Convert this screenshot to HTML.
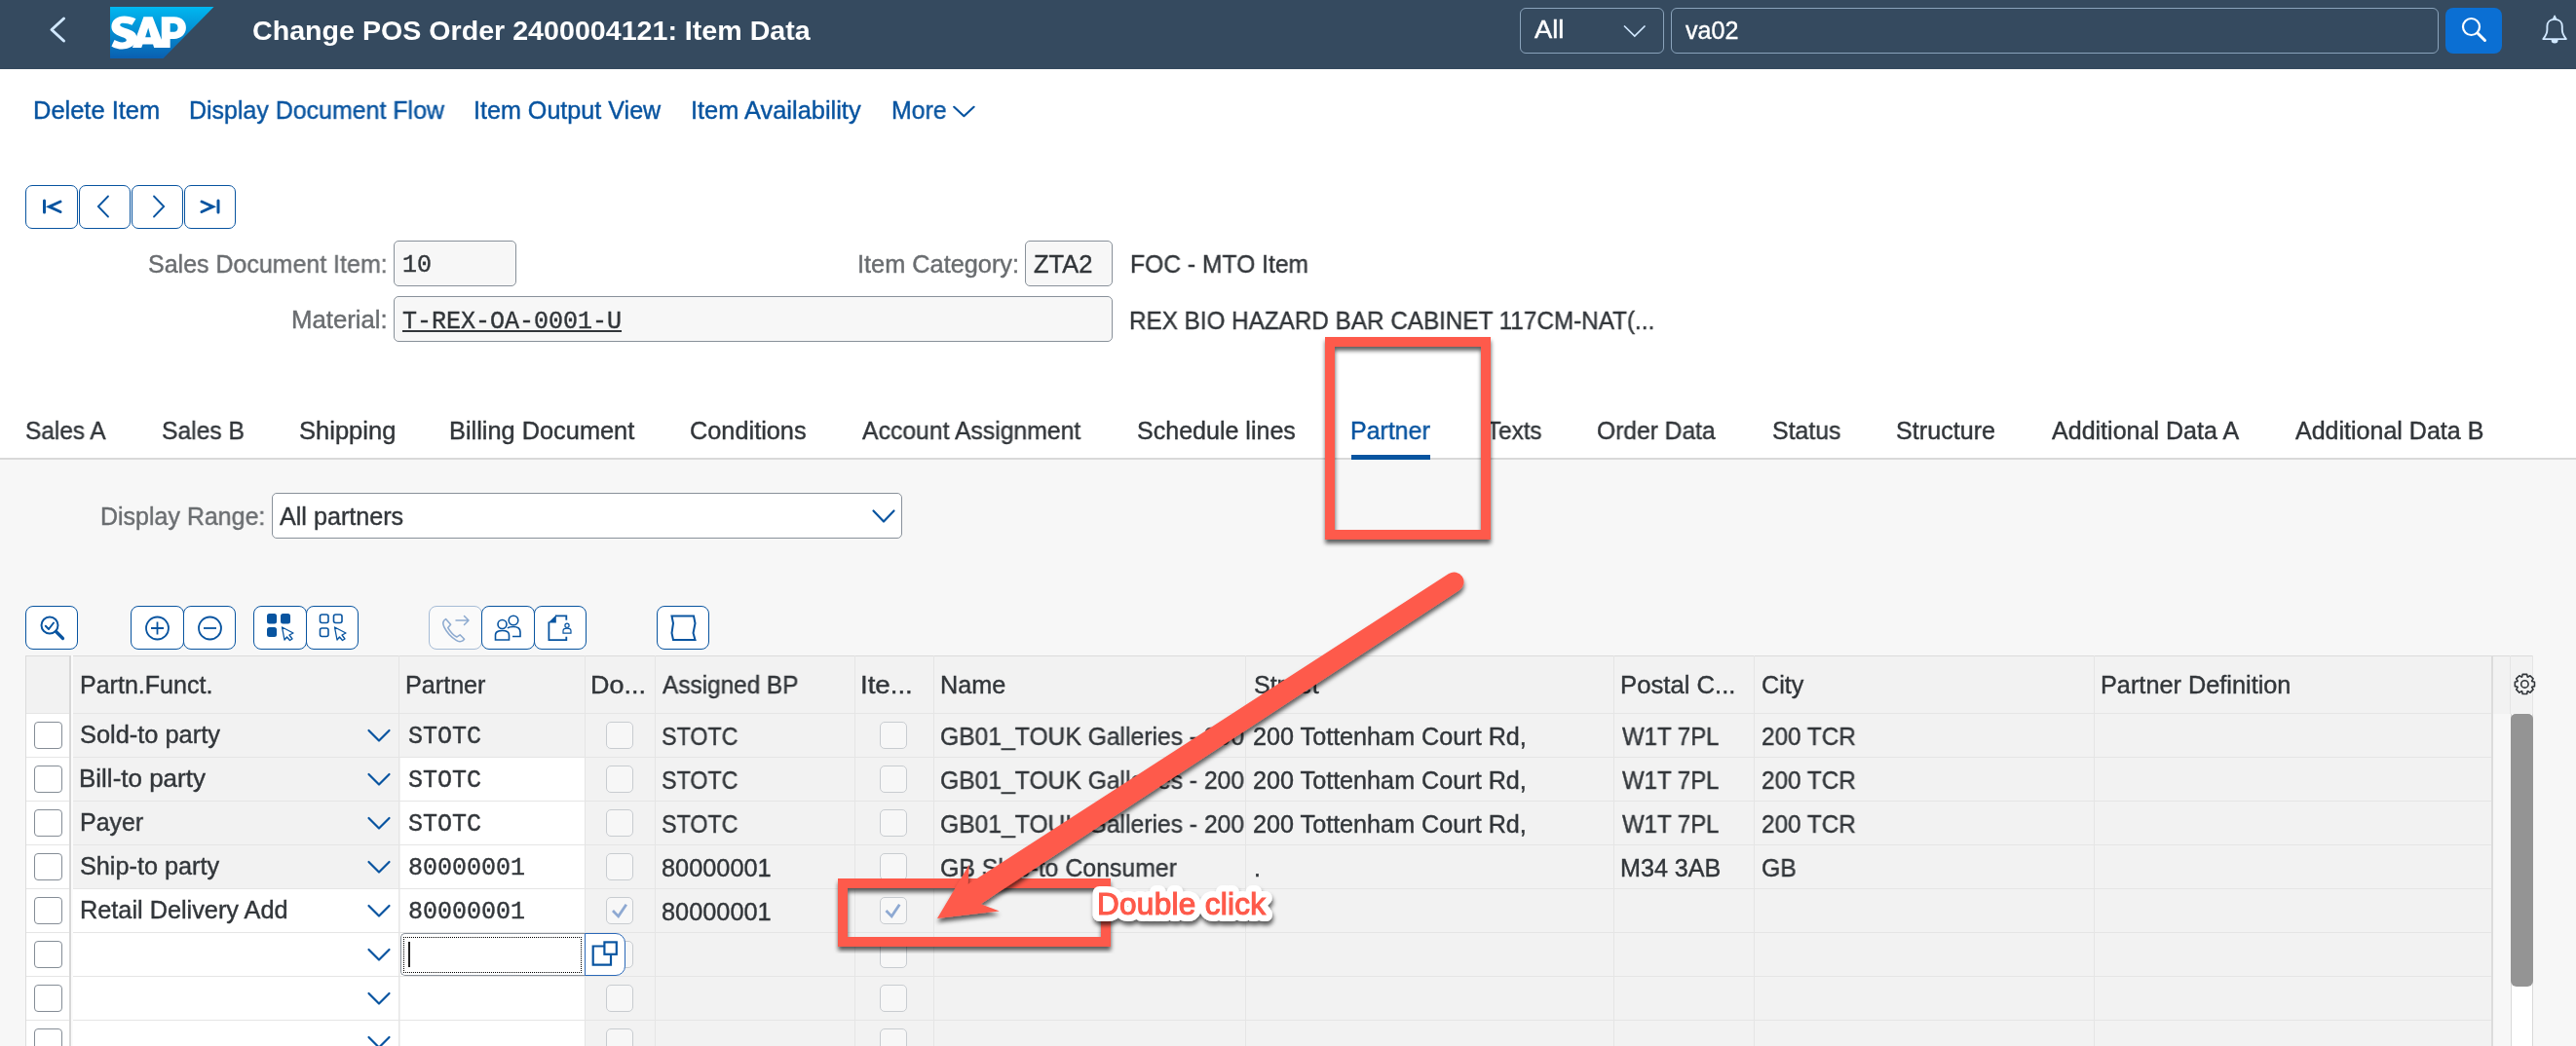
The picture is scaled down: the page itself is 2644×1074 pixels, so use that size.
<!DOCTYPE html>
<html><head><meta charset="utf-8"><title>Change POS Order</title>
<style>
html,body{margin:0;padding:0;}
body{width:2644px;height:1074px;overflow:hidden;position:relative;background:#f7f7f7;font-family:'Liberation Sans', sans-serif;}
.t{position:absolute;white-space:nowrap;will-change:transform;-webkit-text-stroke-width:0.4px;}
.b{position:absolute;box-sizing:border-box;}
svg{position:absolute;overflow:visible;}
</style></head><body>

<div class="b" style="left:0px;top:71px;width:2644px;height:399px;background:#ffffff;"></div>
<div class="b" style="left:0px;top:0px;width:2644px;height:71px;background:#354a5f;"></div>
<svg style="left:0;top:0" width="2644" height="71"><path d="M65.5 19 L53 30.5 L65.5 42" fill="none" stroke="#d1e8ff" stroke-width="3" stroke-linecap="round" stroke-linejoin="round"/><defs><linearGradient id="sapg" x1="0" y1="0" x2="0" y2="1"><stop offset="0" stop-color="#00b8f1"/><stop offset="1" stop-color="#0a5fb0"/></linearGradient></defs><polygon points="113,7 219.5,7 167.5,60 113,60" fill="url(#sapg)"/></svg>
<svg style="left:0;top:0" width="300" height="71"><g transform="translate(110 10) scale(0.043975)"><path fill="#fff" fill-rule="evenodd" d="M590 885 L850 165 L1060 165 L1268 700 L1268 165 L1560 165 C1760 165 1840 290 1840 420 C1840 570 1720 680 1560 680 L1470 680 L1470 885 L1095 885 L1070 805 L830 805 L800 885 Z M890 640 L960 420 L1020 640 Z M1470 320 L1560 320 C1620 320 1650 370 1650 420 C1650 480 1610 520 1560 520 L1470 520 Z"/><path fill="#fff" d="M670 210 C580 170 490 150 400 150 C230 150 100 250 100 400 C100 520 200 580 300 620 C380 650 450 670 450 710 C450 740 410 760 350 760 C280 760 220 730 170 705 L100 850 C180 900 270 920 350 920 C480 920 590 870 650 780 L690 650 C690 540 590 490 480 450 C380 415 300 390 300 350 C300 330 330 315 380 315 C440 315 520 335 580 360 Z"/></g></svg>
<div class="t" style="left:259.13px;top:16.87px;font-size:28.5px;line-height:28.5px;color:#ffffff;font-weight:bold;font-family:'Liberation Sans', sans-serif;transform:scaleX(1.0043);transform-origin:0 0;-webkit-text-stroke-width:0;">Change POS Order 2400004121: Item Data</div>
<div class="b" style="left:1560px;top:8px;width:148px;height:47px;border:1.5px solid #8aa3bb;border-radius:6px;"></div>
<div class="t" style="left:1575.45px;top:17.83px;font-size:25px;line-height:25px;color:#ffffff;font-weight:normal;font-family:'Liberation Sans', sans-serif;transform:scaleX(1.0930);transform-origin:0 0;">All</div>
<svg style="left:0;top:0" width="2644" height="71"><path d="M1667 26.5 L1677.8 37 L1688.5 26.5" fill="none" stroke="#d1e8ff" stroke-width="1.7"/></svg>
<div class="b" style="left:1715px;top:8px;width:788px;height:47px;border:1.5px solid #8aa3bb;border-radius:6px;"></div>
<div class="t" style="left:1730.31px;top:18.83px;font-size:25px;line-height:25px;color:#ffffff;font-weight:normal;font-family:'Liberation Sans', sans-serif;transform:scaleX(1.0023);transform-origin:0 0;">va02</div>
<div class="b" style="left:2510px;top:8px;width:58px;height:47px;background:#0b6fd3;border-radius:8px;"></div>
<svg style="left:0;top:0" width="2644" height="71"><circle cx="2536.5" cy="27.5" r="8.5" fill="none" stroke="#fff" stroke-width="2.2"/><path d="M2543 34 L2550.5 41.5" stroke="#fff" stroke-width="3" stroke-linecap="round"/><path d="M2622 19.9 C2617.2 19.9 2614.4 23 2614.4 27 L2614.4 30.5 C2614.4 34 2612.6 37.2 2610.3 40.1 L2633.9 40.1 C2631.6 37.2 2629.8 34 2629.8 30.5 L2629.8 27 C2629.8 23 2627 19.9 2622 19.9 Z" fill="none" stroke="#d1e8ff" stroke-width="1.9" stroke-linejoin="round"/><path d="M2618.6 41 A3.5 3.5 0 0 0 2625.6 41 Z" fill="#d1e8ff"/><path d="M2620.3 19.5 L2622.1 15.8 L2623.9 19.5 Z" fill="#d1e8ff" stroke="#d1e8ff" stroke-width="1" stroke-linejoin="round"/></svg>
<div class="t" style="left:33.81px;top:100.83px;font-size:25px;line-height:25px;color:#0854a0;font-weight:normal;font-family:'Liberation Sans', sans-serif;transform:scaleX(1.0182);transform-origin:0 0;">Delete Item</div>
<div class="t" style="left:193.65px;top:100.83px;font-size:25px;line-height:25px;color:#0854a0;font-weight:normal;font-family:'Liberation Sans', sans-serif;transform:scaleX(0.9977);transform-origin:0 0;">Display Document Flow</div>
<div class="t" style="left:486.38px;top:100.83px;font-size:25px;line-height:25px;color:#0854a0;font-weight:normal;font-family:'Liberation Sans', sans-serif;transform:scaleX(1.0050);transform-origin:0 0;">Item Output View</div>
<div class="t" style="left:708.96px;top:100.83px;font-size:25px;line-height:25px;color:#0854a0;font-weight:normal;font-family:'Liberation Sans', sans-serif;transform:scaleX(1.0160);transform-origin:0 0;">Item Availability</div>
<div class="t" style="left:914.96px;top:100.83px;font-size:25px;line-height:25px;color:#0854a0;font-weight:normal;font-family:'Liberation Sans', sans-serif;transform:scaleX(0.9943);transform-origin:0 0;">More</div>
<svg style="left:0;top:0" width="1100" height="200"><path d="M979.2 109.8 L989.4 119.2 L999.6 109.8" fill="none" stroke="#0854a0" stroke-width="2.2" stroke-linecap="round" stroke-linejoin="round"/></svg>
<div class="b" style="left:26px;top:190px;width:53.5px;height:45px;border:1.5px solid #0854a0;border-radius:7px;background:#fff;"></div>
<div class="b" style="left:80.5px;top:190px;width:53.5px;height:45px;border:1.5px solid #0854a0;border-radius:7px;background:#fff;"></div>
<div class="b" style="left:134.5px;top:190px;width:53.5px;height:45px;border:1.5px solid #0854a0;border-radius:7px;background:#fff;"></div>
<div class="b" style="left:188.5px;top:190px;width:53.5px;height:45px;border:1.5px solid #0854a0;border-radius:7px;background:#fff;"></div>
<svg style="left:0;top:0" width="300" height="260"><path d="M45.5 206 L45.5 218" stroke="#0854a0" stroke-width="3" stroke-linecap="round"/><path d="M62 207 L50.5 212.2 L62 217.5" fill="none" stroke="#0854a0" stroke-width="3" stroke-linecap="round" stroke-linejoin="miter"/><path d="M111 201.5 L100.8 212 L111 222.5" fill="none" stroke="#0854a0" stroke-width="1.8" stroke-linecap="round"/><path d="M158 201.5 L168.2 212 L158 222.5" fill="none" stroke="#0854a0" stroke-width="1.8" stroke-linecap="round"/><path d="M207 207 L218.5 212.2 L207 217.5" fill="none" stroke="#0854a0" stroke-width="3" stroke-linecap="round"/><path d="M224 206 L224 218" stroke="#0854a0" stroke-width="3" stroke-linecap="round"/></svg>
<div class="t" style="left:152.47px;top:258.83px;font-size:25px;line-height:25px;color:#6a6d70;font-weight:normal;font-family:'Liberation Sans', sans-serif;transform:scaleX(0.9987);transform-origin:0 0;">Sales Document Item:</div>
<div class="b" style="left:404px;top:247px;width:126px;height:46.5px;background:#f7f7f7;border:1px solid #89919a;border-radius:5px;"></div>
<div class="t" style="left:413.00px;top:259.85px;font-size:25px;line-height:25px;color:#32363a;font-weight:normal;font-family:'Liberation Mono', monospace;">10</div>
<div class="t" style="left:880.26px;top:258.83px;font-size:25px;line-height:25px;color:#6a6d70;font-weight:normal;font-family:'Liberation Sans', sans-serif;transform:scaleX(1.0128);transform-origin:0 0;">Item Category:</div>
<div class="b" style="left:1052px;top:247px;width:90px;height:46.5px;background:#f7f7f7;border:1px solid #89919a;border-radius:5px;"></div>
<div class="t" style="left:1060.69px;top:258.83px;font-size:25px;line-height:25px;color:#32363a;font-weight:normal;font-family:'Liberation Sans', sans-serif;transform:scaleX(1.0172);transform-origin:0 0;">ZTA2</div>
<div class="t" style="left:1159.58px;top:258.83px;font-size:25px;line-height:25px;color:#32363a;font-weight:normal;font-family:'Liberation Sans', sans-serif;transform:scaleX(0.9859);transform-origin:0 0;">FOC - MTO Item</div>
<div class="t" style="left:299.39px;top:316.33px;font-size:25px;line-height:25px;color:#6a6d70;font-weight:normal;font-family:'Liberation Sans', sans-serif;transform:scaleX(1.0301);transform-origin:0 0;">Material:</div>
<div class="b" style="left:404px;top:304px;width:738px;height:47px;background:#f7f7f7;border:1px solid #89919a;border-radius:5px;"></div>
<div class="t" style="left:413.00px;top:317.85px;font-size:25px;line-height:25px;color:#32363a;font-weight:normal;font-family:'Liberation Mono', monospace;text-decoration:underline;text-underline-offset:1.5px;text-decoration-thickness:2px;">T-REX-OA-0001-U</div>
<div class="t" style="left:1159.01px;top:317.03px;font-size:25px;line-height:25px;color:#32363a;font-weight:normal;font-family:'Liberation Sans', sans-serif;transform:scaleX(0.9704);transform-origin:0 0;">REX BIO HAZARD BAR CABINET 117CM-NAT(...</div>
<div class="t" style="left:26.09px;top:429.83px;font-size:25px;line-height:25px;color:#32363a;font-weight:normal;font-family:'Liberation Sans', sans-serif;transform:scaleX(0.9749);transform-origin:0 0;">Sales A</div>
<div class="t" style="left:165.88px;top:429.83px;font-size:25px;line-height:25px;color:#32363a;font-weight:normal;font-family:'Liberation Sans', sans-serif;transform:scaleX(0.9854);transform-origin:0 0;">Sales B</div>
<div class="t" style="left:307.24px;top:429.83px;font-size:25px;line-height:25px;color:#32363a;font-weight:normal;font-family:'Liberation Sans', sans-serif;transform:scaleX(1.0215);transform-origin:0 0;">Shipping</div>
<div class="t" style="left:460.72px;top:429.83px;font-size:25px;line-height:25px;color:#32363a;font-weight:normal;font-family:'Liberation Sans', sans-serif;transform:scaleX(1.0142);transform-origin:0 0;">Billing Document</div>
<div class="t" style="left:708.01px;top:429.83px;font-size:25px;line-height:25px;color:#32363a;font-weight:normal;font-family:'Liberation Sans', sans-serif;transform:scaleX(1.0124);transform-origin:0 0;">Conditions</div>
<div class="t" style="left:884.95px;top:429.83px;font-size:25px;line-height:25px;color:#32363a;font-weight:normal;font-family:'Liberation Sans', sans-serif;transform:scaleX(0.9899);transform-origin:0 0;">Account Assignment</div>
<div class="t" style="left:1166.66px;top:429.83px;font-size:25px;line-height:25px;color:#32363a;font-weight:normal;font-family:'Liberation Sans', sans-serif;transform:scaleX(1.0013);transform-origin:0 0;">Schedule lines</div>
<div class="t" style="left:1385.76px;top:429.83px;font-size:25px;line-height:25px;color:#0854a0;font-weight:normal;font-family:'Liberation Sans', sans-serif;transform:scaleX(0.9960);transform-origin:0 0;">Partner</div>
<div class="t" style="left:1525.86px;top:429.83px;font-size:25px;line-height:25px;color:#32363a;font-weight:normal;font-family:'Liberation Sans', sans-serif;transform:scaleX(0.9685);transform-origin:0 0;">Texts</div>
<div class="t" style="left:1639.34px;top:429.83px;font-size:25px;line-height:25px;color:#32363a;font-weight:normal;font-family:'Liberation Sans', sans-serif;transform:scaleX(0.9838);transform-origin:0 0;">Order Data</div>
<div class="t" style="left:1819.37px;top:429.83px;font-size:25px;line-height:25px;color:#32363a;font-weight:normal;font-family:'Liberation Sans', sans-serif;transform:scaleX(0.9951);transform-origin:0 0;">Status</div>
<div class="t" style="left:1946.46px;top:429.83px;font-size:25px;line-height:25px;color:#32363a;font-weight:normal;font-family:'Liberation Sans', sans-serif;transform:scaleX(1.0061);transform-origin:0 0;">Structure</div>
<div class="t" style="left:2105.95px;top:429.83px;font-size:25px;line-height:25px;color:#32363a;font-weight:normal;font-family:'Liberation Sans', sans-serif;transform:scaleX(1.0016);transform-origin:0 0;">Additional Data A</div>
<div class="t" style="left:2355.95px;top:429.83px;font-size:25px;line-height:25px;color:#32363a;font-weight:normal;font-family:'Liberation Sans', sans-serif;transform:scaleX(1.0009);transform-origin:0 0;">Additional Data B</div>
<div class="b" style="left:0px;top:470px;width:2644px;height:2px;background:#d9d9d9;"></div>
<div class="b" style="left:1387px;top:467px;width:81px;height:5px;background:#0854a0;"></div>
<div class="t" style="left:102.95px;top:518.03px;font-size:25px;line-height:25px;color:#6a6d70;font-weight:normal;font-family:'Liberation Sans', sans-serif;transform:scaleX(0.9988);transform-origin:0 0;">Display Range:</div>
<div class="b" style="left:278.5px;top:506px;width:647.5px;height:46.5px;background:#fff;border:1px solid #89919a;border-radius:5px;"></div>
<div class="t" style="left:286.95px;top:518.03px;font-size:25px;line-height:25px;color:#32363a;font-weight:normal;font-family:'Liberation Sans', sans-serif;transform:scaleX(1.0056);transform-origin:0 0;">All partners</div>
<svg style="left:0;top:0" width="1000" height="600"><path d="M896.5 524.5 L907 535.5 L917.5 524.5" fill="none" stroke="#0854a0" stroke-width="2.2" stroke-linecap="round" stroke-linejoin="round"/></svg>
<div class="b" style="left:26px;top:622px;width:54px;height:45px;border:1.5px solid #0854a0;border-radius:8px;background:#fff;"></div>
<div class="b" style="left:134px;top:622px;width:54.5px;height:45px;border:1.5px solid #0854a0;border-radius:8px;background:#fff;"></div>
<div class="b" style="left:188px;top:622px;width:54px;height:45px;border:1.5px solid #0854a0;border-radius:8px;background:#fff;"></div>
<div class="b" style="left:260px;top:622px;width:54.5px;height:45px;border:1.5px solid #0854a0;border-radius:8px;background:#fff;"></div>
<div class="b" style="left:314px;top:622px;width:54px;height:45px;border:1.5px solid #0854a0;border-radius:8px;background:#fff;"></div>
<div class="b" style="left:440px;top:622px;width:54.5px;height:45px;border:1.5px solid #a6bcd6;border-radius:8px;background:#fafafa;"></div>
<div class="b" style="left:494px;top:622px;width:54.5px;height:45px;border:1.5px solid #0854a0;border-radius:8px;background:#fff;"></div>
<div class="b" style="left:548px;top:622px;width:54px;height:45px;border:1.5px solid #0854a0;border-radius:8px;background:#fff;"></div>
<div class="b" style="left:674px;top:622px;width:54px;height:45px;border:1.5px solid #0854a0;border-radius:8px;background:#fff;"></div>
<svg style="left:0;top:0" width="800" height="700"><circle cx="51" cy="642" r="8.5" fill="none" stroke="#0854a0" stroke-width="2"/><path d="M57.5 648.5 L64.5 655.5" stroke="#0854a0" stroke-width="3.2" stroke-linecap="round"/><path d="M46.8 642.8 L50 646 L55 639.5" fill="none" stroke="#0854a0" stroke-width="2" stroke-linecap="round" stroke-linejoin="round"/><circle cx="161.5" cy="645" r="11.5" fill="none" stroke="#0854a0" stroke-width="1.8"/><path d="M155 645 L168 645 M161.5 638.5 L161.5 651.5" stroke="#0854a0" stroke-width="1.8"/><circle cx="215.5" cy="645" r="11.5" fill="none" stroke="#0854a0" stroke-width="1.8"/><path d="M209 645 L222 645" stroke="#0854a0" stroke-width="1.8"/><rect x="274" y="630" width="10" height="10.5" rx="2.5" fill="#0854a0"/><rect x="288" y="630" width="10" height="10.5" rx="2.5" fill="#0854a0"/><rect x="274" y="644" width="10" height="10" rx="2.5" fill="#0854a0"/><path d="M289.5 644 L301 650 L297 652 L300 656 L297.5 657.5 L294.5 654 L292 657 Z" fill="none" stroke="#0854a0" stroke-width="1.3" stroke-linejoin="round"/><rect x="328.5" y="631" width="8.5" height="8.5" rx="2" fill="none" stroke="#0854a0" stroke-width="1.6"/><rect x="342.5" y="631" width="8.5" height="8.5" rx="2" fill="none" stroke="#0854a0" stroke-width="1.6"/><rect x="328.5" y="645" width="8.5" height="8.5" rx="2" fill="none" stroke="#0854a0" stroke-width="1.6"/><path d="M343.5 644 L355 650 L351 652 L354 656 L351.5 657.5 L348.5 654 L346 657 Z" fill="none" stroke="#0854a0" stroke-width="1.3" stroke-linejoin="round"/><g transform="translate(457 635) scale(1.12) translate(-455 -634)"><path d="M455.5 634.5 C453 636 452.5 639 454 642 C456.5 647 460 651 465 654 C468 656 471 655 472.5 653 L468.5 649 L465.5 651 C462 649 459.5 646 457.5 642.5 L460 639.5 Z" fill="none" stroke="#8eabd0" stroke-width="1.4" stroke-linejoin="round"/></g><path d="M468 637 L481 637 M476.5 632.5 L481 637 L476.5 641.5" fill="none" stroke="#8eabd0" stroke-width="1.5" stroke-linecap="round" stroke-linejoin="round"/><circle cx="515.5" cy="641" r="4.5" fill="none" stroke="#0854a0" stroke-width="1.6"/><circle cx="527" cy="637" r="4.8" fill="none" stroke="#0854a0" stroke-width="1.6"/><path d="M508.5 657 L508.5 652 C508.5 648.5 511 647.5 515.5 647.5 C520 647.5 522.5 648.5 522.5 652 L522.5 657 Z" fill="none" stroke="#0854a0" stroke-width="1.6"/><path d="M521 645 C522 644 524 643.5 527 643.5 C532 643.5 534 645 534 649 L534 653.5 L526 653.5" fill="none" stroke="#0854a0" stroke-width="1.6"/><path d="M570 632.3 L581.3 632.3 L581.3 636.8 M581.3 653.7 L581.3 657.1 L563.4 657.1 L563.4 638.6" fill="none" stroke="#0854a0" stroke-width="1.8"/><path d="M562.6 639.4 L570.8 631.4 L570.8 639.4 Z" fill="#0854a0"/><circle cx="582" cy="642.3" r="2.1" fill="none" stroke="#0854a0" stroke-width="1.2"/><path d="M578 650.2 L578 647.8 C578 645.8 579.5 645.2 582 645.2 C584.5 645.2 586 645.8 586 647.8 L586 650.2 Z" fill="none" stroke="#0854a0" stroke-width="1.2"/><path d="M689.5 632.5 L712 632.5 L713.5 640 L711.5 650 L713.5 657 L691 657 L689.5 650 L691 640 Z" fill="none" stroke="#0854a0" stroke-width="2" stroke-linejoin="miter"/></svg>
<div class="b" style="left:26px;top:673px;width:2574px;height:401px;background:#f2f2f2;border-left:1px solid #dcdcdc;border-top:1px solid #dcdcdc;"></div>
<div class="b" style="left:27px;top:732.5px;width:44px;height:341.5px;background:#fff;"></div>
<div class="b" style="left:2558.5px;top:732.5px;width:18.5px;height:341.5px;background:#f7f7f7;"></div>
<div class="b" style="left:2577px;top:732.5px;width:23px;height:341.5px;background:#fff;border-left:1px solid #d9d9d9;border-right:1px solid #d9d9d9;"></div>
<div class="b" style="left:2577px;top:732.5px;width:23px;height:280.5px;background:#949494;border-radius:5px 5px 6px 6px;"></div>
<div class="b" style="left:74.5px;top:912.5px;width:335.0px;height:45.0px;background:#fff;"></div>
<div class="b" style="left:74.5px;top:957.5px;width:335.0px;height:45.0px;background:#fff;"></div>
<div class="b" style="left:74.5px;top:1002.5px;width:335.0px;height:45.0px;background:#fff;"></div>
<div class="b" style="left:74.5px;top:1047.5px;width:335.0px;height:45.0px;background:#fff;"></div>
<div class="b" style="left:410.5px;top:777.5px;width:190.0px;height:45.0px;background:#fff;"></div>
<div class="b" style="left:410.5px;top:822.5px;width:190.0px;height:45.0px;background:#fff;"></div>
<div class="b" style="left:410.5px;top:867.5px;width:190.0px;height:45.0px;background:#fff;"></div>
<div class="b" style="left:410.5px;top:912.5px;width:190.0px;height:45.0px;background:#fff;"></div>
<div class="b" style="left:410.5px;top:957.5px;width:190.0px;height:45.0px;background:#fff;"></div>
<div class="b" style="left:410.5px;top:1002.5px;width:190.0px;height:45.0px;background:#fff;"></div>
<div class="b" style="left:410.5px;top:1047.5px;width:190.0px;height:45.0px;background:#fff;"></div>
<div class="b" style="left:27px;top:732.0px;width:2531px;height:1.0px;background:#e5e5e5;"></div>
<div class="b" style="left:27px;top:777.0px;width:2531px;height:1.0px;background:#e5e5e5;"></div>
<div class="b" style="left:27px;top:822.0px;width:2531px;height:1.0px;background:#e5e5e5;"></div>
<div class="b" style="left:27px;top:867.0px;width:2531px;height:1.0px;background:#e5e5e5;"></div>
<div class="b" style="left:27px;top:912.0px;width:2531px;height:1.0px;background:#e5e5e5;"></div>
<div class="b" style="left:27px;top:957.0px;width:2531px;height:1.0px;background:#e5e5e5;"></div>
<div class="b" style="left:27px;top:1002.0px;width:2531px;height:1.0px;background:#e5e5e5;"></div>
<div class="b" style="left:27px;top:1047.0px;width:2531px;height:1.0px;background:#e5e5e5;"></div>
<div class="b" style="left:71px;top:673px;width:2px;height:401px;background:#d8d8d8;"></div>
<div class="b" style="left:73px;top:673px;width:1.5px;height:401px;background:#fbfbfb;"></div>
<div class="b" style="left:409.0px;top:673px;width:1.0px;height:401px;background:#e5e5e5;"></div>
<div class="b" style="left:600.0px;top:673px;width:1.0px;height:401px;background:#e5e5e5;"></div>
<div class="b" style="left:672.0px;top:673px;width:1.0px;height:401px;background:#e5e5e5;"></div>
<div class="b" style="left:877.0px;top:673px;width:1.0px;height:401px;background:#e5e5e5;"></div>
<div class="b" style="left:958.0px;top:673px;width:1.0px;height:401px;background:#e5e5e5;"></div>
<div class="b" style="left:1277.5px;top:673px;width:1.0px;height:401px;background:#e5e5e5;"></div>
<div class="b" style="left:1656.0px;top:673px;width:1.0px;height:401px;background:#e5e5e5;"></div>
<div class="b" style="left:1799.5px;top:673px;width:1.0px;height:401px;background:#e5e5e5;"></div>
<div class="b" style="left:2149.0px;top:673px;width:1.0px;height:401px;background:#e5e5e5;"></div>
<div class="b" style="left:2557px;top:673px;width:1.5px;height:401px;background:#dcdcdc;"></div>
<div class="b" style="left:2576px;top:673px;width:1px;height:59.5px;background:#e5e5e5;"></div>
<div class="b" style="left:2599px;top:673px;width:1px;height:59.5px;background:#e5e5e5;"></div>
<div class="t" style="left:81.85px;top:690.83px;font-size:25px;line-height:25px;color:#32363a;font-weight:normal;font-family:'Liberation Sans', sans-serif;transform:scaleX(1.0012);transform-origin:0 0;">Partn.Funct.</div>
<div class="t" style="left:415.74px;top:690.83px;font-size:25px;line-height:25px;color:#32363a;font-weight:normal;font-family:'Liberation Sans', sans-serif;transform:scaleX(1.0061);transform-origin:0 0;">Partner</div>
<div class="t" style="left:605.79px;top:690.83px;font-size:25px;line-height:25px;color:#32363a;font-weight:normal;font-family:'Liberation Sans', sans-serif;transform:scaleX(1.0771);transform-origin:0 0;">Do...</div>
<div class="t" style="left:680.45px;top:690.83px;font-size:25px;line-height:25px;color:#32363a;font-weight:normal;font-family:'Liberation Sans', sans-serif;transform:scaleX(0.9741);transform-origin:0 0;">Assigned BP</div>
<div class="t" style="left:882.85px;top:690.83px;font-size:25px;line-height:25px;color:#32363a;font-weight:normal;font-family:'Liberation Sans', sans-serif;transform:scaleX(1.1055);transform-origin:0 0;">Ite...</div>
<div class="t" style="left:964.63px;top:690.83px;font-size:25px;line-height:25px;color:#32363a;font-weight:normal;font-family:'Liberation Sans', sans-serif;transform:scaleX(1.0075);transform-origin:0 0;">Name</div>
<div class="t" style="left:1287.00px;top:690.83px;font-size:25px;line-height:25px;color:#32363a;font-weight:normal;font-family:'Liberation Sans', sans-serif;">Street</div>
<div class="t" style="left:1662.89px;top:690.83px;font-size:25px;line-height:25px;color:#32363a;font-weight:normal;font-family:'Liberation Sans', sans-serif;transform:scaleX(1.0271);transform-origin:0 0;">Postal C...</div>
<div class="t" style="left:1807.72px;top:690.83px;font-size:25px;line-height:25px;color:#32363a;font-weight:normal;font-family:'Liberation Sans', sans-serif;transform:scaleX(1.0061);transform-origin:0 0;">City</div>
<div class="t" style="left:2155.93px;top:690.83px;font-size:25px;line-height:25px;color:#32363a;font-weight:normal;font-family:'Liberation Sans', sans-serif;transform:scaleX(1.0117);transform-origin:0 0;">Partner Definition</div>
<svg style="left:0;top:0" width="2644" height="760"><g transform="translate(2591.4 702.4)"><path d="M-2.83 -7.38 L-2.23 -10.06 L2.23 -10.06 L2.83 -7.38 L3.21 -7.22 L5.53 -8.69 L8.69 -5.53 L7.22 -3.21 L7.38 -2.83 L10.06 -2.23 L10.06 2.23 L7.38 2.83 L7.22 3.21 L8.69 5.53 L5.53 8.69 L3.21 7.22 L2.83 7.38 L2.23 10.06 L-2.23 10.06 L-2.83 7.38 L-3.21 7.22 L-5.53 8.69 L-8.69 5.53 L-7.22 3.21 L-7.38 2.83 L-10.06 2.23 L-10.06 -2.23 L-7.38 -2.83 L-7.22 -3.21 L-8.69 -5.53 L-5.53 -8.69 L-3.21 -7.22 Z" fill="none" stroke="#32363a" stroke-width="1.6" stroke-linejoin="round"/><circle cx="0" cy="0" r="3.7" fill="none" stroke="#32363a" stroke-width="1.6"/></g></svg>
<div class="b" style="left:35px;top:741.0px;width:29px;height:27.5px;background:#fff;border:1.5px solid #858d96;border-radius:4px;"></div>
<div class="b" style="left:622px;top:741.0px;width:28px;height:27.5px;background:#f7f7f7;border:1px solid #c8ccd0;border-radius:5px;"></div>
<div class="b" style="left:902.5px;top:741.0px;width:28.0px;height:27.5px;background:#f7f7f7;border:1px solid #c8ccd0;border-radius:5px;"></div>
<div class="t" style="left:82.45px;top:741.83px;font-size:25px;line-height:25px;color:#32363a;font-weight:normal;font-family:'Liberation Sans', sans-serif;transform:scaleX(1.0152);transform-origin:0 0;">Sold-to party</div>
<div class="t" style="left:419.00px;top:743.85px;font-size:25px;line-height:25px;color:#32363a;font-weight:normal;font-family:'Liberation Mono', monospace;">STOTC</div>
<div class="t" style="left:679.44px;top:743.83px;font-size:25px;line-height:25px;color:#32363a;font-weight:normal;font-family:'Liberation Sans', sans-serif;transform:scaleX(0.9309);transform-origin:0 0;">STOTC</div>
<div class="t" style="left:965.46px;top:743.83px;font-size:25px;line-height:25px;color:#32363a;font-weight:normal;font-family:'Liberation Sans', sans-serif;transform:scaleX(0.9862);transform-origin:0 0;">GB01_TOUK Galleries - 200</div>
<div class="t" style="left:1285.73px;top:743.83px;font-size:25px;line-height:25px;color:#32363a;font-weight:normal;font-family:'Liberation Sans', sans-serif;transform:scaleX(1.0070);transform-origin:0 0;">200 Tottenham Court Rd,</div>
<div class="t" style="left:1665.29px;top:743.83px;font-size:25px;line-height:25px;color:#32363a;font-weight:normal;font-family:'Liberation Sans', sans-serif;transform:scaleX(0.9591);transform-origin:0 0;">W1T 7PL</div>
<div class="t" style="left:1807.78px;top:743.83px;font-size:25px;line-height:25px;color:#32363a;font-weight:normal;font-family:'Liberation Sans', sans-serif;transform:scaleX(0.9725);transform-origin:0 0;">200 TCR</div>
<div class="b" style="left:35px;top:786.0px;width:29px;height:27.5px;background:#fff;border:1.5px solid #858d96;border-radius:4px;"></div>
<div class="b" style="left:622px;top:786.0px;width:28px;height:27.5px;background:#f7f7f7;border:1px solid #c8ccd0;border-radius:5px;"></div>
<div class="b" style="left:902.5px;top:786.0px;width:28.0px;height:27.5px;background:#f7f7f7;border:1px solid #c8ccd0;border-radius:5px;"></div>
<div class="t" style="left:81.47px;top:786.83px;font-size:25px;line-height:25px;color:#32363a;font-weight:normal;font-family:'Liberation Sans', sans-serif;transform:scaleX(1.0387);transform-origin:0 0;">Bill-to party</div>
<div class="t" style="left:419.00px;top:788.85px;font-size:25px;line-height:25px;color:#32363a;font-weight:normal;font-family:'Liberation Mono', monospace;">STOTC</div>
<div class="t" style="left:679.44px;top:788.83px;font-size:25px;line-height:25px;color:#32363a;font-weight:normal;font-family:'Liberation Sans', sans-serif;transform:scaleX(0.9309);transform-origin:0 0;">STOTC</div>
<div class="t" style="left:965.46px;top:788.83px;font-size:25px;line-height:25px;color:#32363a;font-weight:normal;font-family:'Liberation Sans', sans-serif;transform:scaleX(0.9862);transform-origin:0 0;">GB01_TOUK Galleries - 200</div>
<div class="t" style="left:1285.73px;top:788.83px;font-size:25px;line-height:25px;color:#32363a;font-weight:normal;font-family:'Liberation Sans', sans-serif;transform:scaleX(1.0070);transform-origin:0 0;">200 Tottenham Court Rd,</div>
<div class="t" style="left:1665.29px;top:788.83px;font-size:25px;line-height:25px;color:#32363a;font-weight:normal;font-family:'Liberation Sans', sans-serif;transform:scaleX(0.9591);transform-origin:0 0;">W1T 7PL</div>
<div class="t" style="left:1807.78px;top:788.83px;font-size:25px;line-height:25px;color:#32363a;font-weight:normal;font-family:'Liberation Sans', sans-serif;transform:scaleX(0.9725);transform-origin:0 0;">200 TCR</div>
<div class="b" style="left:35px;top:831.0px;width:29px;height:27.5px;background:#fff;border:1.5px solid #858d96;border-radius:4px;"></div>
<div class="b" style="left:622px;top:831.0px;width:28px;height:27.5px;background:#f7f7f7;border:1px solid #c8ccd0;border-radius:5px;"></div>
<div class="b" style="left:902.5px;top:831.0px;width:28.0px;height:27.5px;background:#f7f7f7;border:1px solid #c8ccd0;border-radius:5px;"></div>
<div class="t" style="left:81.55px;top:831.83px;font-size:25px;line-height:25px;color:#32363a;font-weight:normal;font-family:'Liberation Sans', sans-serif;transform:scaleX(0.9977);transform-origin:0 0;">Payer</div>
<div class="t" style="left:419.00px;top:833.85px;font-size:25px;line-height:25px;color:#32363a;font-weight:normal;font-family:'Liberation Mono', monospace;">STOTC</div>
<div class="t" style="left:679.44px;top:833.83px;font-size:25px;line-height:25px;color:#32363a;font-weight:normal;font-family:'Liberation Sans', sans-serif;transform:scaleX(0.9309);transform-origin:0 0;">STOTC</div>
<div class="t" style="left:965.46px;top:833.83px;font-size:25px;line-height:25px;color:#32363a;font-weight:normal;font-family:'Liberation Sans', sans-serif;transform:scaleX(0.9862);transform-origin:0 0;">GB01_TOUK Galleries - 200</div>
<div class="t" style="left:1285.73px;top:833.83px;font-size:25px;line-height:25px;color:#32363a;font-weight:normal;font-family:'Liberation Sans', sans-serif;transform:scaleX(1.0070);transform-origin:0 0;">200 Tottenham Court Rd,</div>
<div class="t" style="left:1665.29px;top:833.83px;font-size:25px;line-height:25px;color:#32363a;font-weight:normal;font-family:'Liberation Sans', sans-serif;transform:scaleX(0.9591);transform-origin:0 0;">W1T 7PL</div>
<div class="t" style="left:1807.78px;top:833.83px;font-size:25px;line-height:25px;color:#32363a;font-weight:normal;font-family:'Liberation Sans', sans-serif;transform:scaleX(0.9725);transform-origin:0 0;">200 TCR</div>
<div class="b" style="left:35px;top:876.0px;width:29px;height:27.5px;background:#fff;border:1.5px solid #858d96;border-radius:4px;"></div>
<div class="b" style="left:622px;top:876.0px;width:28px;height:27.5px;background:#f7f7f7;border:1px solid #c8ccd0;border-radius:5px;"></div>
<div class="b" style="left:902.5px;top:876.0px;width:28.0px;height:27.5px;background:#f7f7f7;border:1px solid #c8ccd0;border-radius:5px;"></div>
<div class="t" style="left:82.45px;top:876.83px;font-size:25px;line-height:25px;color:#32363a;font-weight:normal;font-family:'Liberation Sans', sans-serif;transform:scaleX(1.0095);transform-origin:0 0;">Ship-to party</div>
<div class="t" style="left:419.00px;top:878.85px;font-size:25px;line-height:25px;color:#32363a;font-weight:normal;font-family:'Liberation Mono', monospace;">80000001</div>
<div class="t" style="left:679.40px;top:878.83px;font-size:25px;line-height:25px;color:#32363a;font-weight:normal;font-family:'Liberation Sans', sans-serif;transform:scaleX(1.0126);transform-origin:0 0;">80000001</div>
<div class="t" style="left:965.45px;top:878.83px;font-size:25px;line-height:25px;color:#32363a;font-weight:normal;font-family:'Liberation Sans', sans-serif;transform:scaleX(0.9935);transform-origin:0 0;">GB Ship-to Consumer</div>
<div class="t" style="left:1287.00px;top:878.83px;font-size:25px;line-height:25px;color:#32363a;font-weight:normal;font-family:'Liberation Sans', sans-serif;">.</div>
<div class="t" style="left:1663.34px;top:878.83px;font-size:25px;line-height:25px;color:#32363a;font-weight:normal;font-family:'Liberation Sans', sans-serif;transform:scaleX(1.0053);transform-origin:0 0;">M34 3AB</div>
<div class="t" style="left:1807.76px;top:878.83px;font-size:25px;line-height:25px;color:#32363a;font-weight:normal;font-family:'Liberation Sans', sans-serif;transform:scaleX(0.9896);transform-origin:0 0;">GB</div>
<div class="b" style="left:35px;top:921.0px;width:29px;height:27.5px;background:#fff;border:1.5px solid #858d96;border-radius:4px;"></div>
<div class="b" style="left:622px;top:921.0px;width:28px;height:27.5px;background:#f7f7f7;border:1px solid #c8ccd0;border-radius:5px;"></div>
<div class="b" style="left:902.5px;top:921.0px;width:28.0px;height:27.5px;background:#f7f7f7;border:1px solid #c8ccd0;border-radius:5px;"></div>
<div class="t" style="left:81.53px;top:921.83px;font-size:25px;line-height:25px;color:#32363a;font-weight:normal;font-family:'Liberation Sans', sans-serif;transform:scaleX(1.0113);transform-origin:0 0;">Retail Delivery Add</div>
<div class="t" style="left:419.00px;top:923.85px;font-size:25px;line-height:25px;color:#32363a;font-weight:normal;font-family:'Liberation Mono', monospace;">80000001</div>
<div class="t" style="left:679.40px;top:923.83px;font-size:25px;line-height:25px;color:#32363a;font-weight:normal;font-family:'Liberation Sans', sans-serif;transform:scaleX(1.0126);transform-origin:0 0;">80000001</div>
<div class="b" style="left:35px;top:966.0px;width:29px;height:27.5px;background:#fff;border:1.5px solid #858d96;border-radius:4px;"></div>
<div class="b" style="left:622px;top:966.0px;width:28px;height:27.5px;background:#f7f7f7;border:1px solid #c8ccd0;border-radius:5px;"></div>
<div class="b" style="left:902.5px;top:966.0px;width:28.0px;height:27.5px;background:#f7f7f7;border:1px solid #c8ccd0;border-radius:5px;"></div>
<div class="b" style="left:35px;top:1011.0px;width:29px;height:27.5px;background:#fff;border:1.5px solid #858d96;border-radius:4px;"></div>
<div class="b" style="left:622px;top:1011.0px;width:28px;height:27.5px;background:#f7f7f7;border:1px solid #c8ccd0;border-radius:5px;"></div>
<div class="b" style="left:902.5px;top:1011.0px;width:28.0px;height:27.5px;background:#f7f7f7;border:1px solid #c8ccd0;border-radius:5px;"></div>
<div class="b" style="left:35px;top:1056.0px;width:29px;height:27.5px;background:#fff;border:1.5px solid #858d96;border-radius:4px;"></div>
<div class="b" style="left:622px;top:1056.0px;width:28px;height:27.5px;background:#f7f7f7;border:1px solid #c8ccd0;border-radius:5px;"></div>
<div class="b" style="left:902.5px;top:1056.0px;width:28.0px;height:27.5px;background:#f7f7f7;border:1px solid #c8ccd0;border-radius:5px;"></div>
<svg style="left:0;top:0" width="2644" height="1074"><path d="M378.5 750.0 L389 760.5 L399.5 750.0" fill="none" stroke="#0854a0" stroke-width="2.2" stroke-linecap="round" stroke-linejoin="round"/><path d="M378.5 795.0 L389 805.5 L399.5 795.0" fill="none" stroke="#0854a0" stroke-width="2.2" stroke-linecap="round" stroke-linejoin="round"/><path d="M378.5 840.0 L389 850.5 L399.5 840.0" fill="none" stroke="#0854a0" stroke-width="2.2" stroke-linecap="round" stroke-linejoin="round"/><path d="M378.5 885.0 L389 895.5 L399.5 885.0" fill="none" stroke="#0854a0" stroke-width="2.2" stroke-linecap="round" stroke-linejoin="round"/><path d="M378.5 930.0 L389 940.5 L399.5 930.0" fill="none" stroke="#0854a0" stroke-width="2.2" stroke-linecap="round" stroke-linejoin="round"/><path d="M629 935.1 L634.7 940.9 L642.8 928.8" fill="none" stroke="#8ea9d2" stroke-width="2.8" stroke-linejoin="miter"/><path d="M909.5 935.1 L915.2 940.9 L923.3 928.8" fill="none" stroke="#8ea9d2" stroke-width="2.8" stroke-linejoin="miter"/><path d="M378.5 975.0 L389 985.5 L399.5 975.0" fill="none" stroke="#0854a0" stroke-width="2.2" stroke-linecap="round" stroke-linejoin="round"/><path d="M378.5 1020.0 L389 1030.5 L399.5 1020.0" fill="none" stroke="#0854a0" stroke-width="2.2" stroke-linecap="round" stroke-linejoin="round"/><path d="M378.5 1065.0 L389 1075.5 L399.5 1065.0" fill="none" stroke="#0854a0" stroke-width="2.2" stroke-linecap="round" stroke-linejoin="round"/></svg>
<div class="b" style="left:410.5px;top:958.0px;width:190.5px;height:43.5px;background:#fff;border:1px solid #89919a;border-right:none;border-radius:5px 0 0 5px;"></div>
<div class="b" style="left:414px;top:962px;width:182.5px;height:36.5px;border:1px dotted #000;"></div>
<div class="b" style="left:418.5px;top:966.5px;width:2.0px;height:26.5px;background:#222;"></div>
<div class="b" style="left:600px;top:958.0px;width:42px;height:43.5px;background:#fff;border:1.5px solid #2a68b8;border-radius:0 10px 10px 0;"></div>
<svg style="left:0;top:0" width="700" height="1074"><path d="M627 980.5 L627 990.6 L608.7 990.6 L608.7 971.5 L620 971.5" fill="none" stroke="#0854a0" stroke-width="2.2"/><rect x="620.4" y="967.4" width="12.4" height="12.4" fill="none" stroke="#0854a0" stroke-width="2.2"/></svg>
<svg style="left:0;top:0" width="2644" height="1074"><defs><filter id="sh" x="-20%" y="-20%" width="140%" height="140%"><feDropShadow dx="0.3" dy="4" stdDeviation="2" flood-color="#000" flood-opacity="0.62"/></filter><filter id="sh2" x="-20%" y="-40%" width="140%" height="180%"><feDropShadow dx="1" dy="4" stdDeviation="2" flood-color="#000" flood-opacity="0.62"/></filter></defs><rect x="1365" y="351" width="160" height="198" fill="none" stroke="#fe5a4b" stroke-width="10" filter="url(#sh)"/><rect x="865" y="907" width="270" height="60" fill="none" stroke="#fe5a4b" stroke-width="10" filter="url(#sh)"/><path d="M962.00 943.00 L1025.82 935.45 L1006.68 928.22 L1497.96 605.88 A10.0 10.0 0 0 0 1487.04 589.12 L993.58 908.11 L994.71 887.68 Z" fill="#fe5a4b" filter="url(#sh)"/><g filter="url(#sh2)"><text x="1126" y="938.6" font-family="Liberation Sans" font-size="31.5" letter-spacing="0.3" fill="#fe5a4b" stroke="#fff" stroke-width="14" stroke-linejoin="round" paint-order="stroke">Double click</text></g><text x="1126" y="938.6" font-family="Liberation Sans" font-size="31.5" letter-spacing="0.3" fill="#fe5a4b" stroke="#fe5a4b" stroke-width="1.1">Double click</text></svg>
<!--TABLE-->
</body></html>
